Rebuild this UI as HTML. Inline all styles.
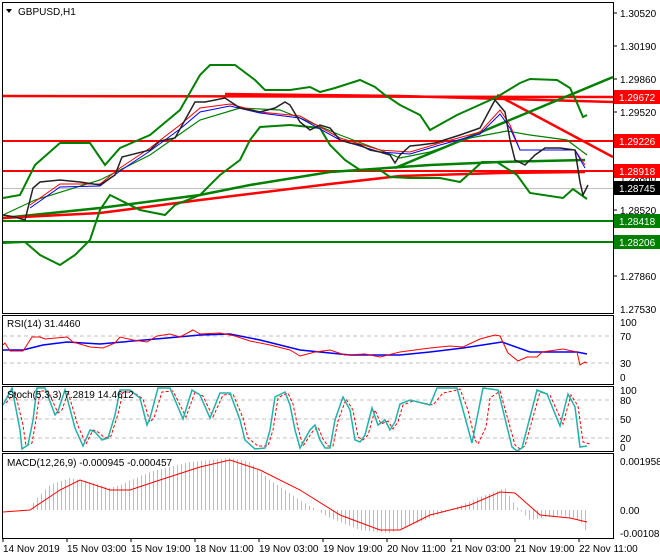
<!DOCTYPE html>
<html><head><meta charset="utf-8"><style>
html,body{margin:0;padding:0;background:#fff;}
svg{display:block;font-family:"Liberation Sans",sans-serif;font-size:10px;}
</style></head><body>
<svg width="660" height="560" viewBox="0 0 660 560" xmlns="http://www.w3.org/2000/svg">
<defs>
<pattern id="hb" x="0" y="0" width="4" height="560" patternUnits="userSpaceOnUse"><rect x="1" y="0" width="1" height="560" fill="#bcbcbc"/></pattern>
<clipPath id="cm"><rect x="3" y="3" width="610" height="310"/></clipPath>
<clipPath id="cr"><rect x="3" y="316" width="610" height="68"/></clipPath>
<clipPath id="cs"><rect x="3" y="387" width="610" height="64"/></clipPath>
<clipPath id="cd"><rect x="3" y="454" width="610" height="84"/></clipPath>
</defs>
<rect width="660" height="560" fill="#fff"/>
<g fill="none" stroke="#000" stroke-width="1">
<rect x="2.5" y="2.5" width="611" height="311"/>
<rect x="2.5" y="315.5" width="611" height="69"/>
<rect x="2.5" y="386.5" width="611" height="65"/>
<rect x="2.5" y="453.5" width="611" height="85"/>
</g>
<g clip-path="url(#cm)" fill="none">
<line x1="3" y1="188.5" x2="613" y2="188.5" stroke="#c0c0c0"/>
<line x1="3" y1="221" x2="613" y2="221" stroke="#008000" stroke-width="2"/>
<line x1="3" y1="242" x2="613" y2="242" stroke="#008000" stroke-width="2"/>
<line x1="3" y1="96" x2="613" y2="97" stroke="#ff0000" stroke-width="2.5"/>
<polyline points="225,94 400,96 613,102" stroke="#ff0000" stroke-width="2.5"/>
<line x1="3" y1="141" x2="613" y2="141" stroke="#ff0000" stroke-width="2"/>
<line x1="3" y1="171" x2="613" y2="171" stroke="#ff0000" stroke-width="2"/>
<line x1="497" y1="95" x2="613" y2="157" stroke="#ff0000" stroke-width="2.5"/>
<line x1="395" y1="168" x2="613" y2="77" stroke="#008000" stroke-width="2.5"/>
<polyline points="3,218 100,208 200,195 250,185 330,172 430,165 500,162 585,160" stroke="#008000" stroke-width="2.5"/>
<polyline points="3,218 100,213 200,200 330,184 400,176 500,173 585,172" stroke="#ff0000" stroke-width="2.5"/>
<polyline points="3,198 20,195 35,165 60,143 90,143 105,165 120,148 150,135 180,110 200,75 210,65 235,65 255,80 265,90 290,90 310,87 320,92 335,88 360,80 375,87 385,95 400,105 420,115 430,130 457,115 497,97 520,83 530,79 557,80 570,88 577,103 583,117 587,115" stroke="#008000" stroke-width="2"/>
<polyline points="3,243 25,242 40,255 60,265 75,255 90,240 100,210 110,195 120,200 140,210 165,215 175,205 200,195 220,175 240,160 250,140 260,127 290,125 320,128 330,145 345,160 360,170 380,170 390,177 410,178 440,178 460,182 470,173 482,162 497,162 517,175 530,193 563,198 573,189 587,199" stroke="#008000" stroke-width="2"/>
<polyline points="3,215 35,200 100,180 150,155 200,120 240,108 280,110 300,118 340,135 380,150 400,158 430,152 470,138 507,131 530,135 567,140 587,155" stroke="#008000" stroke-width="1.2"/>
<polyline points="30,205 60,184 100,184 120,168 150,148 180,125 200,108 230,104 260,112 300,116 340,138 380,150 410,152 440,143 480,132 500,110 510,125 520,150 540,150 575,150 585,165" stroke="#ff0000" stroke-width="1"/>
<polyline points="30,208 60,187 100,186 120,171 150,151 180,129 200,112 230,106 260,113 300,118 340,140 380,152 410,154 440,145 480,134 500,114 510,128 520,150 540,150 575,150 585,168" stroke="#0000ff" stroke-width="1"/>
<polyline points="3,215 15,217 25,220 33,188 40,182 60,180 80,182 100,185 115,175 122,157 150,150 160,141 175,138 185,120 195,102 205,102 225,98 240,108 260,112 275,108 285,102 290,105 300,122 310,130 320,125 330,128 340,140 350,143 360,145 370,150 380,152 390,155 395,163 400,155 410,146 420,145 435,143 460,135 480,128 495,100 505,112 510,140 515,160 525,165 535,155 545,148 560,148 575,150 580,182 583,195 588,185" stroke="#222" stroke-width="1.5"/>
</g>
<g fill="#000">
<text x="620" y="17">1.30520</text>
<text x="620" y="50">1.30190</text>
<text x="620" y="83">1.29860</text>
<text x="620" y="116">1.29520</text>
<text x="620" y="182">1.28860</text>
<text x="620" y="214">1.28520</text>
<text x="620" y="280">1.27860</text>
<text x="620" y="313">1.27530</text>
</g>
<g stroke="#000"><line x1="613" y1="13" x2="617" y2="13"/><line x1="613" y1="46" x2="617" y2="46"/><line x1="613" y1="79" x2="617" y2="79"/><line x1="613" y1="112" x2="617" y2="112"/><line x1="613" y1="210" x2="617" y2="210"/><line x1="613" y1="276" x2="617" y2="276"/></g>
<rect x="614" y="90" width="46" height="14" fill="#ff0000"/><text x="619" y="101" fill="#fff">1.29672</text>
<rect x="614" y="134" width="46" height="14" fill="#ff0000"/><text x="619" y="145" fill="#fff">1.29226</text>
<rect x="614" y="164" width="46" height="14" fill="#ff0000"/><text x="619" y="175" fill="#fff">1.28918</text>
<rect x="614" y="181" width="46" height="14" fill="#000"/><text x="619" y="192" fill="#fff">1.28745</text>
<rect x="614" y="214" width="46" height="14" fill="#008000"/><text x="619" y="225" fill="#fff">1.28418</text>
<rect x="614" y="235" width="46" height="14" fill="#008000"/><text x="619" y="246" fill="#fff">1.28206</text>
<path d="M6 9 L12 9 L9 13 Z" fill="#000"/>
<text x="18" y="15" fill="#000">GBPUSD,H1</text>
<g clip-path="url(#cr)" fill="none">
<line x1="3" y1="336" x2="613" y2="336" stroke="#c0c0c0" stroke-dasharray="4,3"/>
<line x1="3" y1="363" x2="613" y2="363" stroke="#c0c0c0" stroke-dasharray="4,3"/>
<polyline points="3,350 23,350 43,345 67,342 100,344 133,341 167,338 200,335 230,334 260,340 300,350 350,355 400,355 430,352 463,348 502,342 530,352 577,352 587,354" stroke="#0000ff" stroke-width="1.5"/>
<polyline points="3,345 5,343 10,351 23,351 32,337 40,337 45,339 67,337 73,342 90,347 103,348 115,343 120,337 133,340 147,342 157,336 170,334 180,337 193,330 200,334 220,333 235,336 250,341 270,345 290,350 300,356 315,352 330,350 345,355 365,354 380,357 400,352 430,348 450,346 463,347 480,339 495,335 500,336 508,353 518,361 527,357 537,357 542,352 563,349 577,352 580,365 585,362 587,363" stroke="#ff0000" stroke-width="1"/>
</g>
<text x="7" y="327">RSI(14) 31.4460</text>
<g fill="#000"><text x="620" y="326">100</text><text x="620" y="340">70</text><text x="620" y="367">30</text><text x="620" y="381">0</text></g>
<g clip-path="url(#cs)" fill="none">
<line x1="3" y1="400" x2="613" y2="400" stroke="#c0c0c0" stroke-dasharray="4,3"/>
<line x1="3" y1="419" x2="613" y2="419" stroke="#c0c0c0" stroke-dasharray="4,3"/>
<line x1="3" y1="438" x2="613" y2="438" stroke="#c0c0c0" stroke-dasharray="4,3"/>
<polyline points="6,403 15,392 23,425 26,446 32,443 36,420 40,391 48,391 58,413 62,410 68,392 78,426 86,444 93,430 98,432 105,438 111,436 118,414 123,392 133,392 143,399 150,422 154,418 162,392 173,391 186,417 195,392 203,396 213,417 223,395 233,394 243,418 248,438 258,446 268,446 273,430 278,398 283,395 288,393 293,404 298,428 303,446 313,431 318,427 323,439 328,446 333,446 338,421 346,399 353,410 358,437 363,440 368,435 375,410 381,424 388,421 393,429 398,422 403,405 413,401 433,405 443,393 453,391 460,389 468,410 475,440 478,444 486,427 490,398 500,391 515,445 520,449 525,446 540,392 550,395 563,424 571,395 578,406 583,442 590,444" stroke="#ff0000" stroke-width="1" stroke-dasharray="3,2"/>
<polyline points="3,405 12,388 20,430 22,449 28,445 33,420 37,388 45,388 55,415 58,411 65,390 75,428 83,446 90,430 95,432 102,440 108,438 115,415 120,390 130,390 140,398 147,425 150,418 158,388 170,388 183,419 192,390 200,395 210,418 220,393 230,393 240,420 245,440 255,449 265,448 270,430 275,397 285,392 290,405 295,430 300,448 310,430 315,425 320,440 325,448 330,448 335,420 343,397 350,410 355,440 360,442 365,435 372,408 378,425 385,420 390,430 395,422 400,404 410,400 430,405 437,388 457,388 472,443 483,388 498,390 512,447 517,451 522,448 537,390 547,394 560,426 568,394 575,407 580,447 587,446" stroke="#20b2aa" stroke-width="1.5"/>
</g>
<text x="7" y="398">Stoch(5,3,3) 7.2819 14.4612</text>
<g fill="#000"><text x="620" y="394">100</text><text x="620" y="404">80</text><text x="620" y="423">50</text><text x="620" y="442">20</text><text x="620" y="451">0</text></g>
<g clip-path="url(#cd)" fill="none">
<polygon points="3,510 30,510 35,500 50,485 70,478 90,482 110,488 120,485 150,472 190,462 230,458 250,462 270,480 300,500 330,518 360,530 390,533 420,522 450,510 480,497 505,488 515,505 530,520 560,515 580,520 587,533 588,510" fill="url(#hb)"/>
<polyline points="3,512 30,510 60,490 80,480 110,490 130,490 160,480 200,467 230,460 260,470 300,490 340,515 380,530 400,530 430,515 470,505 500,492 515,493 540,515 570,518 587,522" stroke="#ff0000" stroke-width="1"/>
</g>
<text x="7" y="466">MACD(12,26,9) -0.000945 -0.000457</text>
<g fill="#000"><text x="620" y="465">0.001958</text><text x="620" y="514">0.00</text><text x="620" y="537">-0.001083</text></g>
<g stroke="#000"><line x1="3" y1="538" x2="3" y2="542"/><line x1="67" y1="538" x2="67" y2="542"/><line x1="131" y1="538" x2="131" y2="542"/><line x1="195" y1="538" x2="195" y2="542"/><line x1="259" y1="538" x2="259" y2="542"/><line x1="323" y1="538" x2="323" y2="542"/><line x1="387" y1="538" x2="387" y2="542"/><line x1="451" y1="538" x2="451" y2="542"/><line x1="515" y1="538" x2="515" y2="542"/><line x1="579" y1="538" x2="579" y2="542"/></g>
<g fill="#000">
<text x="3" y="552">14 Nov 2019</text>
<text x="67" y="552">15 Nov 03:00</text>
<text x="131" y="552">15 Nov 19:00</text>
<text x="195" y="552">18 Nov 11:00</text>
<text x="259" y="552">19 Nov 03:00</text>
<text x="323" y="552">19 Nov 19:00</text>
<text x="387" y="552">20 Nov 11:00</text>
<text x="451" y="552">21 Nov 03:00</text>
<text x="515" y="552">21 Nov 19:00</text>
<text x="579" y="552">22 Nov 11:00</text>
</g>
</svg>
</body></html>
